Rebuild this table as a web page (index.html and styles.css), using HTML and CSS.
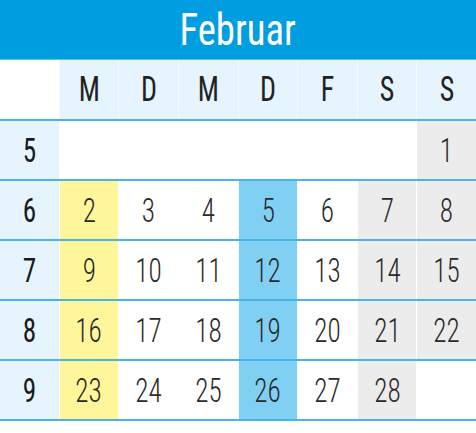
FILE: index.html
```html
<!DOCTYPE html>
<html lang="de">
<head>
<meta charset="utf-8">
<title>Februar</title>
<link rel="stylesheet" href="styles.css">
</head>
<body>
<div class="cal">
  <div class="title"><span class="t">Februar</span></div>
  <div class="row head">
    <div class="c blank"></div>
    <div class="c"><span class="t">M</span></div>
    <div class="c"><span class="t">D</span></div>
    <div class="c"><span class="t">M</span></div>
    <div class="c"><span class="t">D</span></div>
    <div class="c"><span class="t">F</span></div>
    <div class="c"><span class="t">S</span></div>
    <div class="c"><span class="t">S</span></div>
  </div>
  <div class="row">
    <div class="c wk"><span class="t">5</span></div>
    <div class="c"></div>
    <div class="c"></div>
    <div class="c"></div>
    <div class="c"></div>
    <div class="c"></div>
    <div class="c"></div>
    <div class="c we"><span class="t">1</span></div>
  </div>
  <div class="row">
    <div class="c wk"><span class="t">6</span></div>
    <div class="c mo"><span class="t">2</span></div>
    <div class="c"><span class="t">3</span></div>
    <div class="c"><span class="t">4</span></div>
    <div class="c th"><span class="t">5</span></div>
    <div class="c"><span class="t">6</span></div>
    <div class="c we"><span class="t">7</span></div>
    <div class="c we"><span class="t">8</span></div>
  </div>
  <div class="row">
    <div class="c wk"><span class="t">7</span></div>
    <div class="c mo"><span class="t">9</span></div>
    <div class="c"><span class="t">10</span></div>
    <div class="c"><span class="t">11</span></div>
    <div class="c th"><span class="t">12</span></div>
    <div class="c"><span class="t">13</span></div>
    <div class="c we"><span class="t">14</span></div>
    <div class="c we"><span class="t">15</span></div>
  </div>
  <div class="row">
    <div class="c wk"><span class="t">8</span></div>
    <div class="c mo"><span class="t">16</span></div>
    <div class="c"><span class="t">17</span></div>
    <div class="c"><span class="t">18</span></div>
    <div class="c th"><span class="t">19</span></div>
    <div class="c"><span class="t">20</span></div>
    <div class="c we"><span class="t">21</span></div>
    <div class="c we"><span class="t">22</span></div>
  </div>
  <div class="row">
    <div class="c wk"><span class="t">9</span></div>
    <div class="c mo"><span class="t">23</span></div>
    <div class="c"><span class="t">24</span></div>
    <div class="c"><span class="t">25</span></div>
    <div class="c th"><span class="t">26</span></div>
    <div class="c"><span class="t">27</span></div>
    <div class="c we"><span class="t">28</span></div>
    <div class="c"></div>
  </div>
</div>
</body>
</html>
```
FILE: styles.css
```css
* { box-sizing: border-box; }
html, body { margin: 0; padding: 0; background: #fff; }
body { font-family: "Roboto Condensed", Roboto, "Liberation Sans", sans-serif; }
.cal { width: 476px; }
.t { display: inline-block; transform: scaleX(0.8); }
.title {
  height: 60px;
  background: #009ee0;
  border-bottom: 1px solid #5fc2ee;
  color: #fff;
  font-size: 45px;
  line-height: 60px;
  text-align: center;
}
.title .t { transform: scaleX(0.86); }
.row {
  display: grid;
  grid-template-columns: repeat(8, 1fr);
  column-gap: 1px;
  height: 60px;
  border-bottom: 2px solid #4cb3e6;
  background: #fff;
}
.row.head { height: 61px; background: #f4fafe; }
.c {
  display: flex;
  align-items: center;
  justify-content: center;
  font-size: 34px;
  font-weight: 300;
  color: #2a2a2a;
}
.head .c {
  background: #e6f4fd;
  font-size: 35px;
  font-weight: 400;
  color: #222;
}
.head .c.blank { background: #fff; }
.c.wk {
  background: #e6f4fd;
  font-weight: 400;
  color: #1a1a1a;
}
.c.mo { background: #fff59b; }
.c.th { background: #80d0f4; }
.c.we { background: #ececec; }
```
